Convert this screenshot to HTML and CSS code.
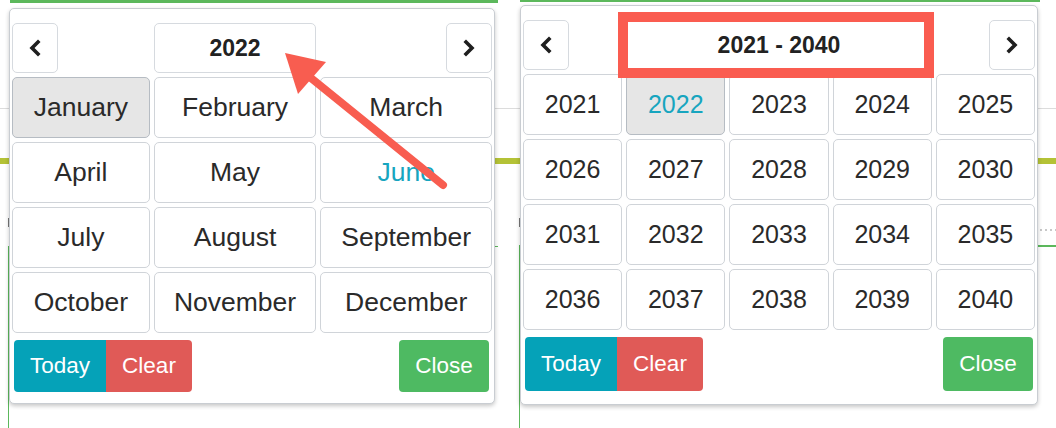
FILE: index.html
```html
<!DOCTYPE html>
<html lang="en">
<head>
<meta charset="utf-8">
<title>Date pickers</title>
<link rel="stylesheet" href="styles.css">
</head>
<body>
<div class="page">
  <div class="picker picker-months">
    <div class="picker-head cols-months">
      <button class="nav prev" aria-label="Previous"><svg width="16" height="18" viewBox="0 0 16 18"><polyline points="11,3 5,9 11,15" /></svg></button>
      <button class="switch">2022</button>
      <button class="nav next" aria-label="Next"><svg width="16" height="18" viewBox="0 0 16 18"><polyline points="5,3 11,9 5,15" /></svg></button>
    </div>
    <div class="picker-grid cols-months">
      <span class="cell active">January</span>
      <span class="cell">February</span>
      <span class="cell">March</span>
      <span class="cell">April</span>
      <span class="cell">May</span>
      <span class="cell current">June</span>
      <span class="cell">July</span>
      <span class="cell">August</span>
      <span class="cell">September</span>
      <span class="cell">October</span>
      <span class="cell">November</span>
      <span class="cell">December</span>
    </div>
    <div class="picker-foot">
      <div class="btn-group">
        <button class="btn btn-today">Today</button><button class="btn btn-clear">Clear</button>
      </div>
      <button class="btn btn-close">Close</button>
    </div>
  </div>

  <div class="picker picker-years">
    <div class="picker-head cols-years">
      <button class="nav prev" aria-label="Previous"><svg width="16" height="18" viewBox="0 0 16 18"><polyline points="11,3 5,9 11,15" /></svg></button>
      <button class="switch switch-wide">2021 - 2040</button>
      <button class="nav next" aria-label="Next"><svg width="16" height="18" viewBox="0 0 16 18"><polyline points="5,3 11,9 5,15" /></svg></button>
    </div>
    <div class="picker-grid cols-years">
      <span class="cell">2021</span>
      <span class="cell active current">2022</span>
      <span class="cell">2023</span>
      <span class="cell">2024</span>
      <span class="cell">2025</span>
      <span class="cell">2026</span>
      <span class="cell">2027</span>
      <span class="cell">2028</span>
      <span class="cell">2029</span>
      <span class="cell">2030</span>
      <span class="cell">2031</span>
      <span class="cell">2032</span>
      <span class="cell">2033</span>
      <span class="cell">2034</span>
      <span class="cell">2035</span>
      <span class="cell">2036</span>
      <span class="cell">2037</span>
      <span class="cell">2038</span>
      <span class="cell">2039</span>
      <span class="cell">2040</span>
    </div>
    <div class="picker-foot">
      <div class="btn-group">
        <button class="btn btn-today">Today</button><button class="btn btn-clear">Clear</button>
      </div>
      <button class="btn btn-close">Close</button>
    </div>
  </div>

  <svg class="annot-arrow" width="1056" height="428" viewBox="0 0 1056 428" aria-hidden="true">
    <line x1="443" y1="185" x2="306" y2="74" />
    <polygon points="285,53 326,62 298,94" />
  </svg>
  <div class="annot-box" aria-hidden="true"></div>
</div>
</body>
</html>
```

FILE: styles.css
```css
* { box-sizing: border-box; }

html, body {
  margin: 0;
  padding: 0;
}

body {
  width: 1056px;
  height: 428px;
  overflow: hidden;
  font-family: "Liberation Sans", Arial, Helvetica, sans-serif;
  color: #2a2a2a;
  background:
    linear-gradient(#777, #777) 8px 218px / 1px 9px no-repeat,
    linear-gradient(#777, #777) 519px 218px / 1px 9px no-repeat,
    repeating-linear-gradient(90deg, #c8c8c8 0 2px, transparent 2px 5px) 1040px 229px / 16px 2px no-repeat,
    linear-gradient(#5cb85c, #5cb85c) 8px 246px / 490px 1px no-repeat,
    linear-gradient(#5cb85c, #5cb85c) 519px 245px / 537px 2px no-repeat,
    linear-gradient(#5cb85c, #5cb85c) 8px 246px / 1px 182px no-repeat,
    linear-gradient(#5cb85c, #5cb85c) 519px 246px / 1px 182px no-repeat,
    linear-gradient(#5cb85c, #5cb85c) 10px 0 / 488px 3px no-repeat,
    linear-gradient(#5cb85c, #5cb85c) 520px 0 / 520px 2px no-repeat,
    linear-gradient(#b4c236, #b4c236) 0 158px / 100% 6px no-repeat,
    linear-gradient(#dcdcdc, #dcdcdc) 0 108px / 100% 1px no-repeat,
    #ffffff;
}

.page {
  position: relative;
  display: flex;
  align-items: flex-start;
  gap: 25px;
  padding: 5px 0 0 9px;
  height: 428px;
}

/* ---------- picker panel ---------- */
.picker {
  background: #fff;
  border: 1px solid #c9cdd2;
  border-radius: 5px;
  box-shadow: 0 2px 4px rgba(0, 0, 0, 0.22);
  padding: 14px 2px 11px 2px;
}

.picker-months {
  width: 486px;
  margin-top: 3px;
}

.picker-years {
  width: 518px;
  padding-top: 14px;
  padding-bottom: 13px;
}

.cols-months {
  display: grid;
  grid-template-columns: 138fr 163fr 172fr;
  column-gap: 4px;
}

.cols-years {
  display: grid;
  grid-template-columns: repeat(5, 1fr);
  column-gap: 4px;
}

/* ---------- header ---------- */
.picker-head {
  height: 50px;
  margin-bottom: 4px;
}

.picker-head button {
  font-family: inherit;
  background: #fff;
  border: 1px solid #d6dadf;
  border-radius: 5px;
  padding: 0;
  margin: 0;
  color: #222;
  cursor: pointer;
}

.nav {
  width: 46px;
  height: 100%;
  display: flex;
  align-items: center;
  justify-content: center;
}

.nav.prev { justify-self: start; grid-column: 1; }
.nav.next { justify-self: end; grid-column: -2; }

.nav svg polyline {
  fill: none;
  stroke: #1f1f1f;
  stroke-width: 3.6;
  stroke-linecap: square;
  stroke-linejoin: miter;
}

.switch {
  grid-column: 2;
  height: 100%;
  font-size: 23px;
  font-weight: bold;
}

.switch-wide {
  grid-column: 2 / 5;
}

/* ---------- grid ---------- */
.picker-grid {
  row-gap: 4px;
  grid-auto-rows: 61px;
}

.cell {
  display: flex;
  align-items: center;
  justify-content: center;
  border: 1px solid #d0d4d9;
  border-radius: 5px;
  font-size: 25px;
  color: #2a2a2a;
  background: #fff;
  white-space: nowrap;
}

.picker-months .cell {
  font-size: 26.5px;
}

.cell.active {
  background: #e6e6e6;
  border-color: #b6bcc3;
}

.cell.current {
  color: #17a5bf;
}

/* ---------- footer ---------- */
.picker-foot {
  display: flex;
  justify-content: space-between;
  align-items: center;
  margin-top: 7px;
  padding: 0 3px 0 2px;
}

.picker-years .picker-foot {
  padding: 0 2px 0 2px;
}

.btn-group {
  display: flex;
}

.btn {
  font-family: inherit;
  font-size: 22.5px;
  color: #fff;
  border: none;
  margin: 0;
  padding: 0;
  height: 52px;
  cursor: pointer;
}

.picker-years .btn {
  height: 54px;
}

.btn-today {
  width: 92px;
  background: #05a2b8;
  border-radius: 4px 0 0 4px;
}

.btn-clear {
  width: 86px;
  background: #e05a57;
  border-radius: 0 4px 4px 0;
}

.btn-close {
  width: 90px;
  background: #4eba62;
  border-radius: 4px;
}

/* ---------- annotations ---------- */
.annot-arrow {
  position: absolute;
  left: 0;
  top: 0;
  pointer-events: none;
}

.annot-arrow line {
  stroke: #f85d50;
  stroke-width: 8;
  stroke-linecap: round;
}

.annot-arrow polygon {
  fill: #f85d50;
}

.annot-box {
  position: absolute;
  left: 618px;
  top: 12px;
  width: 316px;
  height: 66px;
  border: 10px solid #fa5c50;
  pointer-events: none;
}
```
